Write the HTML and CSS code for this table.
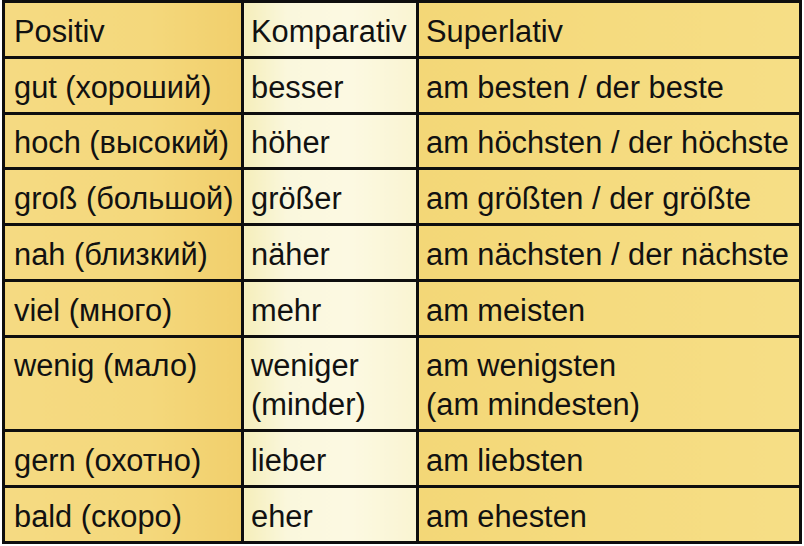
FILE: index.html
```html
<!DOCTYPE html>
<html lang="de">
<head>
<meta charset="utf-8">
<title>Steigerung der Adjektive</title>
<link rel="stylesheet" href="styles.css">
</head>
<body>
<table class="grades">
  <colgroup>
    <col class="c-pos">
    <col class="c-komp">
    <col class="c-sup">
  </colgroup>
  <tr class="row">
    <td class="pos">Positiv</td>
    <td class="komp">Komparativ</td>
    <td class="sup">Superlativ</td>
  </tr>
  <tr class="row">
    <td class="pos">gut (хороший)</td>
    <td class="komp">besser</td>
    <td class="sup">am besten / der beste</td>
  </tr>
  <tr class="row">
    <td class="pos">hoch (высокий)</td>
    <td class="komp">höher</td>
    <td class="sup">am höchsten / der höchste</td>
  </tr>
  <tr class="row">
    <td class="pos">groß (большой)</td>
    <td class="komp">größer</td>
    <td class="sup">am größten / der größte</td>
  </tr>
  <tr class="row">
    <td class="pos">nah (близкий)</td>
    <td class="komp">näher</td>
    <td class="sup">am nächsten / der nächste</td>
  </tr>
  <tr class="row">
    <td class="pos">viel (много)</td>
    <td class="komp">mehr</td>
    <td class="sup">am meisten</td>
  </tr>
  <tr class="row">
    <td class="pos">wenig (мало)</td>
    <td class="komp">weniger<br>(minder)</td>
    <td class="sup">am wenigsten<br>(am mindesten)</td>
  </tr>
  <tr class="row">
    <td class="pos">gern (охотно)</td>
    <td class="komp">lieber</td>
    <td class="sup">am liebsten</td>
  </tr>
  <tr class="row">
    <td class="pos">bald (скоро)</td>
    <td class="komp">eher</td>
    <td class="sup">am ehesten</td>
  </tr>
</table>
</body>
</html>
```

FILE: styles.css
```css
html, body {
  margin: 0;
  padding: 0;
  background: #ffffff;
}

body {
  padding: 0 0 0 2px;
}

.grades {
  border-collapse: collapse;
  table-layout: fixed;
  width: 800px;
  border: 3px solid #0e0e0e;
  font-family: "Liberation Sans", Arial, sans-serif;
  font-size: 30.8px;
  line-height: 39px;
  color: #111111;
}

.c-pos { width: 239px; }
.c-komp { width: 175px; }
.c-sup { width: 383px; }

.grades td {
  border: 3px solid #0e0e0e;
  padding: 8.75px 5px 5px 9px;
  vertical-align: top;
  white-space: nowrap;
  overflow: hidden;
}

.grades td.komp,
.grades td.sup {
  padding-left: 7px;
}

.pos {
  background: linear-gradient(to right, #f5da82 0%, #f4d87c 60%, #f1cf6c 100%);
}

.komp {
  background: linear-gradient(to right, #f5eebb 0%, #faf7dc 25%, #fcf9e2 60%, #f9f4d2 100%);
}

.sup {
  background: linear-gradient(to right, #f3d777 0%, #f5db7f 50%, #f6de86 100%);
}
```
